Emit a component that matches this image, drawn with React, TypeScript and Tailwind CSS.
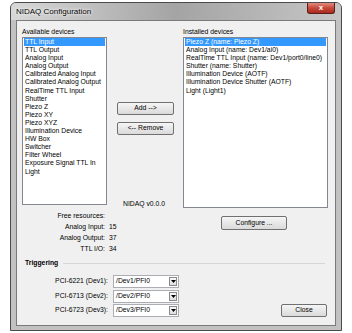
const available = [
  "TTL Input",
  "TTL Output",
  "Analog Input",
  "Analog Output",
  "Calibrated Analog Input",
  "Calibrated Analog Output",
  "RealTime TTL Input",
  "Shutter",
  "Piezo Z",
  "Piezo XY",
  "Piezo XYZ",
  "Illumination Device",
  "HW Box",
  "Switcher",
  "Filter Wheel",
  "Exposure Signal TTL In",
  "Light",
]

const installed = [
  "Piezo Z (name: Piezo Z)",
  "Analog Input (name: Dev1/ai0)",
  "RealTime TTL Input (name: Dev1/port0/line0)",
  "Shutter (name: Shutter)",
  "Illumination Device (AOTF)",
  "Illumination Device Shutter (AOTF)",
  "Light (Light1)",
]

const resources = [
  ["Analog Input:", "15"],
  ["Analog Output:", "37"],
  ["TTL I/O:", "34"],
]

const triggers = [
  ["PCI-6221 (Dev1):", "/Dev1/PFI0"],
  ["PCI-6713 (Dev2):", "/Dev2/PFI0"],
  ["PCI-6723 (Dev3):", "/Dev3/PFI0"],
]

function Button({ label, className }: { label: string; className: string }) {
  return (
    <div
      className={`flex items-center justify-center rounded-[2px] border border-[#707070] bg-gradient-to-b from-[#f5f5f5] to-[#dadada] text-[6.8px] leading-none text-black ${className}`}
    >
      {label}
    </div>
  )
}

function ListBox({ items, className }: { items: string[]; className: string }) {
  return (
    <div className={`overflow-hidden border border-[#828790] bg-white px-px ${className}`}>
      {items.map((item, i) => (
        <div
          key={item}
          className={`h-[8.1px] whitespace-nowrap pl-[1px] leading-[8.1px] ${
            i === 0 ? "bg-[#3399ff] text-white" : "text-black"
          }`}
        >
          {item}
        </div>
      ))}
    </div>
  )
}

function Combo({ value }: { value: string }) {
  return (
    <div className="flex h-[13px] w-[66px] items-center border border-[#abadb3] bg-white">
      <span className="flex-1 pl-[2px] leading-none">{value}</span>
      <div className="mr-px flex h-[9px] w-[8px] items-center justify-center border border-[#8a8a8a] bg-gradient-to-b from-[#fafafa] to-[#dedede]">
        <svg width="5" height="3" viewBox="0 0 5 3">
          <path d="M0 0h5L2.5 3z" fill="#000" />
        </svg>
      </div>
    </div>
  )
}

export default function App() {
  return (
    <div className="h-[333px] w-[352px] bg-white pl-[10px] pt-[2px] font-['Liberation_Sans',Arial,sans-serif] text-[6.8px] text-black">
      <div className="flex h-[329px] w-[332px] flex-col rounded-t-[6px] border border-[#4a4a4a] bg-[#c2c2c2]">
        {/* title bar */}
        <div className="flex h-[17px] rounded-t-[5px] bg-gradient-to-r from-[#d8d8d8] via-[#a4a4a4] to-[#c6c6c6]">
          <span className="mt-[4px] pl-[5px] text-[8px] leading-[10px] text-black [text-shadow:0_0_4px_#fff,0_0_2px_#fff]">
            NIDAQ Configuration
          </span>
          <div className="ml-auto mr-[6px] flex h-[11px] w-[28px] items-center justify-center rounded-b-[3px] border border-t-0 border-[#5b1d16] bg-gradient-to-b from-[#e08a7f] via-[#c6483a] to-[#a72a1d] text-[8px] font-bold leading-none text-white">
            x
          </div>
        </div>

        {/* client area */}
        <div className="mx-[5px] h-[306px] border border-[#7a7a7a] bg-[#f0f0f0] pl-[5px] pt-[6px]">
          <div className="flex">
            {/* available */}
            <div className="flex w-[85px] flex-col">
              <div className="h-[10px] leading-[9px]">Available devices</div>
              <ListBox items={available} className="h-[168px]" />
              <div className="mt-[5px] grid w-max grid-cols-[83px_auto] gap-x-[4px]">
                <div className="h-[11px] text-right leading-[11px]">Free resources:</div>
                <div />
                {resources.map(([k, v]) => (
                  <div key={k} className="contents">
                    <div className="h-[11px] text-right leading-[11px]">{k}</div>
                    <div className="h-[11px] leading-[11px]">{v}</div>
                  </div>
                ))}
              </div>
            </div>

            {/* middle */}
            <div className="flex w-[76px] flex-col">
              <Button label="Add -->" className="ml-[10px] mt-[75px] h-[13px] w-[57px]" />
              <Button label="<-- Remove" className="ml-[10px] mt-[7px] h-[13px] w-[57px]" />
              <div className="ml-[16px] mt-[64px] leading-[9px]">NIDAQ v0.0.0</div>
            </div>

            {/* installed */}
            <div className="flex w-[145px] flex-col">
              <div className="h-[10px] leading-[9px]">Installed devices</div>
              <ListBox items={installed} className="h-[171px]" />
              <Button label="Configure ..." className="ml-[38px] mt-[8px] h-[14px] w-[66px]" />
            </div>
          </div>

          {/* triggering */}
          <div className="mt-[4px] flex h-[10px] w-[306px] items-center">
            <span className="pl-[3px] font-bold leading-[10px]">Triggering</span>
            <div className="ml-[5px] mr-[3px] h-px flex-1 bg-[#d5d5d5]" />
          </div>
          <div className="mt-[7px] flex w-[306px]">
            <div className="flex flex-col gap-[1.5px]">
              {triggers.map(([label, value]) => (
                <div key={label} className="flex items-center">
                  <div className="w-[86px] text-right leading-none">{label}</div>
                  <div className="ml-[5px]">
                    <Combo value={value} />
                  </div>
                </div>
              ))}
            </div>
            <Button label="Close" className="mr-px ml-auto h-[13px] w-[46px] self-end" />
          </div>
        </div>
      </div>
    </div>
  )
}
